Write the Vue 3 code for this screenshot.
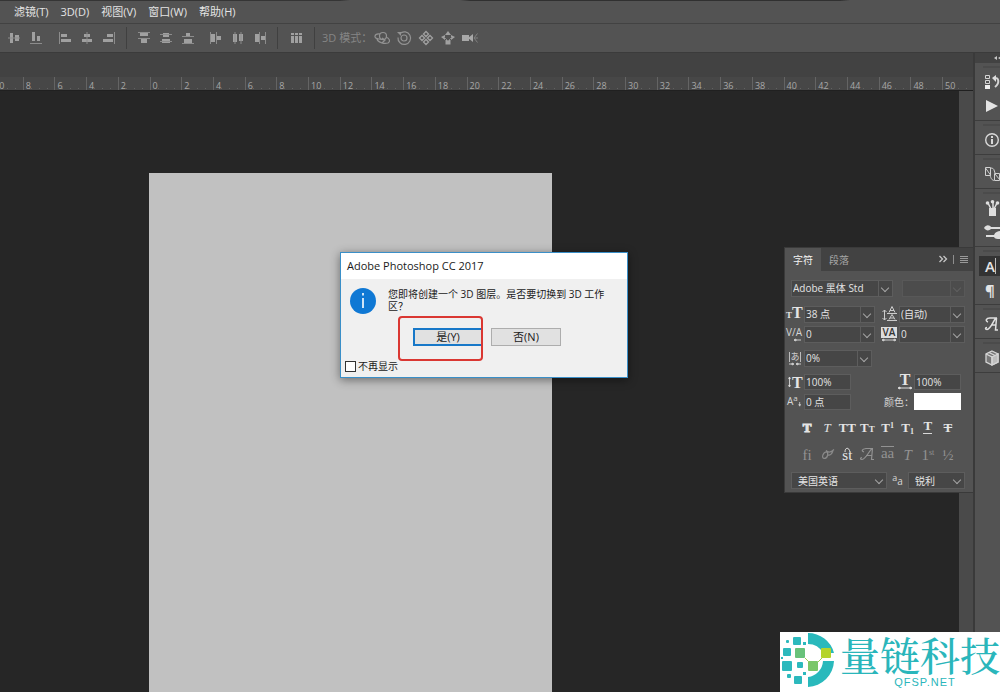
<script setup>
const menus = ['滤镜(T)', '3D(D)', '视图(V)', '窗口(W)', '帮助(H)']

const ruler = []
for (let n = -10; n <= 50; n += 2) ruler.push(Math.abs(n))

const toolGroups = [
  {
    cls: 'first',
    items: [
      { label: '垂直居中对齐', d: 'M4 3h3v10H4zM9 5h4v6H9z', l: 'M2 8h12' },
      { label: '底对齐', d: 'M4 2h3v9H4zM9 6h3v5H9z', l: 'M2 13.5h12' }
    ]
  },
  {
    cls: 'second',
    items: [
      { label: '左对齐', d: 'M4 4h6v3H4zM4 9h10v3H4z', l: 'M2.5 2v12' },
      { label: '水平居中对齐', d: 'M5 4h6v3H5zM3 9h10v3H3z', l: 'M8 2v12' },
      { label: '右对齐', d: 'M6 4h6v3H6zM2 9h10v3H2z', l: 'M13.5 2v12' }
    ]
  },
  {
    cls: 'third',
    items: [
      { label: '按顶分布', d: 'M4 3h8v3H4zM5 9h6v4H5z', l: 'M2 2.5h12M2 8.5h12' },
      { label: '垂直居中分布', d: 'M5 3h6v4H5zM4 9h8v4H4z', l: 'M2 4.5h12M2 11.5h12' },
      { label: '按底分布', d: 'M6 3h4v3H6zM4 9h8v4H4z', l: 'M2 6.5h12M2 13.5h12' }
    ]
  },
  {
    cls: 'fourth',
    items: [
      { label: '按左分布', d: 'M3 4h4v8H3zM9 6h4v4H9z', l: 'M2.5 2v12M8.5 2v12' },
      { label: '水平居中分布', d: 'M3 4h4v8H3zM9 4h4v7H9z', l: 'M5 2v12M11 2v12' },
      { label: '按右分布', d: 'M3 4h4v8H3zM9 6h4v4H9z', l: 'M7.5 2v12M13.5 2v12' }
    ]
  },
  {
    cls: 'fifth',
    items: [{ label: '自动对齐图层', d: 'M3 3h3v2H3zM3 6h3v7H3zM7 3h3v2H7zM7 6h3v7H7zM11 3h3v2h-3zM11 6h3v7h-3z', l: '' }]
  }
]
</script>

<template>
  <div class="app">
    <nav class="menubar">
      <button v-for="m in menus" :key="m" type="button">{{ m }}</button>
    </nav>

    <div class="toolbar">
      <div v-for="g in toolGroups" :key="g.cls" class="tools" :class="g.cls">
        <button v-for="t in g.items" :key="t.label" type="button" :aria-label="t.label">
          <svg viewBox="0 0 16 16"><path :d="t.d" fill="#a0a0a0" /><path :d="t.l" stroke="#8c8c8c" fill="none" /></svg>
        </button>
      </div>
      <span class="mode">3D 模式：</span>
      <div class="tools modes">
        <button type="button" aria-label="旋转 3D 对象">
          <svg viewBox="0 0 16 16" fill="none" stroke="#929292" stroke-width="1.2"><circle cx="9" cy="6" r="3.500" /><path d="M6 4C0 3-1 9 5 9l6 1M3 9c1 4 8 5 11 4 3-2 1-5-2-6M8 8l3 2-3 3" /></svg>
        </button>
        <button type="button" aria-label="滚动 3D 对象">
          <svg viewBox="0 0 16 16" fill="none" stroke="#929292" stroke-width="1.2"><path d="M4 3.500a6.300 6.300 0 1 1-2 4" /><path d="M1 2h4v4z" fill="#929292" stroke="none" /><circle cx="8" cy="8" r="3" /></svg>
        </button>
        <button type="button" aria-label="拖动 3D 对象">
          <svg viewBox="0 0 16 16" fill="none" stroke="#a0a0a0" stroke-width="1.3"><path d="M8 1.500L10.500 4 8 6.500 5.500 4zM8 9.500l2.500 2.500L8 14.500 5.500 12zM1.500 8L4 5.500 6.500 8 4 10.500zM9.500 8L12 5.500 14.500 8 12 10.500z" /></svg>
        </button>
        <button type="button" aria-label="滑动 3D 对象">
          <svg viewBox="0 0 16 16" fill="#a0a0a0"><path d="M8 1l3 4H5zM1 7l4-2v5zM15 7l-4-2v5zM5.500 10h5v4.500h-5z" /><path d="M4 7l4 4 4-4" fill="none" stroke="#8a8a8a" /></svg>
        </button>
        <button type="button" aria-label="缩放 3D 相机">
          <svg viewBox="0 0 16 16" fill="#a8a8a8"><path d="M0 5h7v6H0zM6 8l5-4v8z" /><path d="M15.500 3.500L12 8l3.500 4.500M12 8h4" fill="none" stroke="#808080" /></svg>
        </button>
      </div>
    </div>

    <div class="workspace">
      <main class="document">
        <div class="tabstrip"></div>
        <div class="ruler"><span v-for="(n, i) in ruler" :key="i">{{ n }}</span></div>
        <div class="stage">
          <div class="canvas"><div class="page"></div></div>
          <div class="scroll"></div>
        </div>
      </main>

      <aside class="dock">
        <div class="dockhead"><svg viewBox="0 0 8 6" fill="#c8c8c8"><path d="M4 1v4L1 3zM8 1v4L5 3z" /></svg></div>
        <div class="dockgroup">
          <button type="button" aria-label="历史记录">
            <svg viewBox="0 0 16 16" fill="none" stroke="#d4d4d4"><path d="M.500 1.500h4v3h-4zM.500 6.500h4v3h-4z" /><path d="M0 11h5v4H0z" fill="#eee" stroke="none" /><path d="M9 4c5-1 6 5 1 9" stroke-width="2" /><path d="M11 1L7 4l4 4z" fill="#ddd" stroke="none" /></svg>
          </button>
          <button type="button" aria-label="动作"><svg viewBox="0 0 16 16" fill="#e4e4e4"><path d="M1 2l12 6-12 6z" /></svg></button>
        </div>
        <div class="dockgroup">
          <button type="button" aria-label="信息">
            <svg viewBox="0 0 16 16" fill="none" stroke="#d8d8d8"><circle cx="7" cy="8" r="6.300" stroke-width="1.400" /><path d="M7 4v2M7 7v5" stroke-width="2" /></svg>
          </button>
        </div>
        <div class="dockgroup">
          <button type="button" aria-label="图层复合">
            <svg viewBox="0 0 16 16" fill="none" stroke="#d0d0d0"><path d="M.500 1.500h5v8h-5zM9.500 7.500h5v7h-5zM.500 2l5 7M6 2c3 0 3 2 4 5M5 9c1 4 2 5 4 5.500M10 8l5 6" /></svg>
          </button>
        </div>
        <div class="dockgroup">
          <button type="button" aria-label="画笔预设">
            <svg viewBox="0 0 16 16" fill="#dedede"><path d="M4 8h7v8H4z" /><path d="M6 9L3 3M8 9V2M9 9l3-6" stroke="#dedede" stroke-width="1.500" /><circle cx="2.500" cy="3" r="1.800" /><circle cx="7.500" cy="1.800" r="1.800" /><circle cx="12.500" cy="3" r="1.800" /></svg>
          </button>
          <button type="button" aria-label="画笔">
            <svg viewBox="0 0 16 16" fill="#dedede"><path d="M-1 4c2-4 6-3 7-1h9v2H6C4 7 1 7-1 4zM1 11h8c1-3 4-4 6-4v8c-3 0-5 0-6-2H1z" /></svg>
          </button>
        </div>
        <div class="dockgroup">
          <button type="button" class="on" aria-label="字符"><span class="char">A</span></button>
          <button type="button" aria-label="段落"><span class="para">¶</span></button>
        </div>
        <div class="dockgroup">
          <button type="button" aria-label="字形">
            <svg viewBox="0 0 16 16" fill="none" stroke="#e0e0e0" stroke-width="1.500"><path d="M3 6C0 5 1 2 5 2h7M11.500 2l-1 12H13M11 2C8 5 6 13 2 13.500c-2 0-2-2 0-2M6 9h5" /></svg>
          </button>
        </div>
        <div class="dockgroup">
          <button type="button" aria-label="3D">
            <svg viewBox="0 0 16 16" stroke="#d5d5d5" stroke-width="1.300"><path d="M7 1l6 3v8l-6 3-6-3V4z" fill="#777" /><path d="M7 7l6-3v8l-6 3z" fill="#bdbdbd" /><path d="M1 4l6 3v8M4 2.500l6 3" fill="none" /></svg>
          </button>
        </div>
      </aside>
    </div>

    <section class="panel" aria-label="字符面板">
      <header class="tabs">
        <button type="button" class="active">字符</button>
        <button type="button">段落</button>
        <svg class="ctl" viewBox="0 0 32 12" fill="none" stroke="#c6c6c6"><path d="M1.500 3l3 3-3 3M5.500 3l3 3-3 3" stroke-width="1.300" /><path d="M15.500 2v9" stroke="#8e8e8e" /><path d="M22 3.500h8M22 5.500h8M22 7.500h8M22 9.500h8" stroke="#999" /></svg>
      </header>

      <div class="row font">
        <span class="pick"><select aria-label="字体"><option>Adobe 黑体 Std</option></select></span>
        <span class="pick off"><select aria-label="字体样式" disabled><option></option></select></span>
      </div>

      <div class="pairs">
        <label for="size" aria-label="字体大小"><span class="ser"><small>T</small>T</span></label>
        <span class="pick"><select id="size"><option>38 点</option></select></span>
        <label for="lead" aria-label="行距"><svg viewBox="0 0 18 16" fill="none" stroke="#ccc"><path d="M3.500 4v10M1.500 6l2-2 2 2M1.500 12l2 2 2-2M8 6.500l3-6 3 6M9 4.500h4M8 13.500l3-5 3 5M9 12h4M6 7.500h10M6 14.500h10" /></svg></label>
        <span class="pick"><select id="lead"><option>(自动)</option></select></span>
        <label for="kern" aria-label="字距微调"><span class="va">V/A</span><svg class="under" viewBox="0 0 16 4" stroke="#ccc" fill="#ccc"><path d="M8 2h7M10 1L8 2l2 1z" /></svg></label>
        <span class="pick"><select id="kern"><option>0</option></select></span>
        <label for="track" aria-label="字距调整"><span class="va box">VA</span><svg class="under" viewBox="0 0 16 4" stroke="#ccc" fill="#ccc"><path d="M1 2h14M3 1L1 2l2 1zM13 1l2 1-2 1z" /></svg></label>
        <span class="pick"><select id="track"><option>0</option></select></span>
      </div>

      <div class="row prop">
        <label for="tsume" aria-label="比例间距"><span class="jp">あ</span><svg class="under" viewBox="0 0 16 4" stroke="#ccc" fill="#ccc"><path d="M2 2h4M9 2h5M5 1l2 1-2 1zM11 1L9 2l2 1z" /></svg></label>
        <span class="pick"><select id="tsume"><option>0%</option></select></span>
      </div>

      <div class="scales">
        <label for="vs" aria-label="垂直缩放"><svg viewBox="0 0 6 14" class="arrow" stroke="#ddd" fill="#ddd"><path d="M3 2v10M3 1l1 2H2zM3 13l1-2H2z" /></svg><span class="ser">T</span></label>
        <input id="vs" value="100%" />
        <label for="hs" class="hs" aria-label="水平缩放"><span class="ser">T</span><svg class="under" viewBox="0 0 16 4" stroke="#ddd" fill="#ddd"><path d="M2 2h12M3 1L1 2l2 1zM13 1l2 1-2 1z" /></svg></label>
        <input id="hs" value="100%" />
        <label for="base" aria-label="基线偏移"><span class="va">A<sup>a</sup></span><svg class="arrow" viewBox="0 0 6 14" stroke="#ccc" fill="#ccc"><path d="M2 7v4M2 12l1-2H1z" /></svg></label>
        <input id="base" value="0 点" />
        <label for="tint" class="tint">颜色：</label>
        <button id="tint" type="button" class="swatch"></button>
      </div>

      <div class="glyphs bold">
        <button type="button" class="heavy" aria-label="仿粗体">T</button>
        <button type="button" aria-label="仿斜体"><i class="thin">T</i></button>
        <button type="button" aria-label="全部大写">TT</button>
        <button type="button" aria-label="小型大写">T<small>T</small></button>
        <button type="button" aria-label="上标">T<sup>1</sup></button>
        <button type="button" aria-label="下标">T<sub>1</sub></button>
        <button type="button" aria-label="下划线"><span class="line">T</span></button>
        <button type="button" aria-label="删除线"><s>T</s></button>
      </div>
      <div class="glyphs open">
        <button type="button" aria-label="标准连字">fi</button>
        <button type="button" aria-label="上下文替代字"><svg viewBox="0 0 16 16" fill="none" stroke="#8a8a8a" stroke-width="1.200"><path d="M9 6C4 5 2 12 5 12.500c4 0 5-6 2-8 2 2 5 2 8-1M9 9c3 1 4-2 5-4" /></svg></button>
        <button type="button" aria-label="自由连字" class="lit">st<svg class="liga" viewBox="0 0 10 5" fill="none" stroke="#e4e4e4"><path d="M3 5c0-5 4-5 5 0" /></svg></button>
        <button type="button" aria-label="花饰字"><svg viewBox="0 0 16 16" fill="none" stroke="#929292" stroke-width="1.200"><path d="M5 6C2 5 3 3 7 2.500h7M13.500 2.500l-1 11H15M13 2.500C10 5 7 13 3 13.500c-2 0-2-2 0-2M7 9.500h6" /></svg></button>
        <button type="button" aria-label="文体替代字"><span class="over">aa</span></button>
        <button type="button" aria-label="标题替代字"><i>T</i></button>
        <button type="button" aria-label="序数字">1<sup>st</sup></button>
        <button type="button" aria-label="分数字">½</button>
      </div>

      <div class="row lang">
        <span class="pick"><select aria-label="语言"><option>美国英语</option></select></span>
        <label for="aa" aria-label="消除锯齿"><sup>a</sup>a</label>
        <span class="pick"><select id="aa"><option>锐利</option></select></span>
      </div>
    </section>

    <div class="dialog" role="dialog" aria-labelledby="dlg-title">
      <h1 id="dlg-title">Adobe Photoshop CC 2017</h1>
      <div class="message">
        <svg viewBox="0 0 26 26"><circle cx="13" cy="13" r="13" fill="#0f78d4" /><path d="M13 10v10M13 5v2.500" stroke="#fff" stroke-width="1.600" /></svg>
        <p>您即将创建一个 3D 图层。是否要切换到 3D 工作区？</p>
      </div>
      <div class="actions">
        <span class="marked"><button type="button" class="yes">是(Y)</button></span>
        <button type="button">否(N)</button>
      </div>
      <label class="again"><input type="checkbox" />不再显示</label>
    </div>

    <div class="brand">
      <svg viewBox="0 0 56 56">
        <path d="M28 1A27 27 0 0 1 54 21H43A17 17 0 0 0 28 12zM54 29A27 27 0 0 1 28 55V45A17 17 0 0 0 43 29z" fill="#29b9bc" />
        <g fill="#2cb9bd"><rect x="13" y="5" width="8" height="8" rx="1" /><rect x="3" y="16" width="8" height="8" rx="1" /><rect x="2" y="29" width="10" height="10" rx="1" /><rect x="17" y="30" width="6" height="6" rx="1" /><rect x="14" y="44" width="8" height="8" rx="1" /><rect x="7" y="42" width="4" height="4" rx="1" /><rect x="6" y="8" width="3" height="3" rx="1" /><rect x="23" y="10" width="3" height="3" /><rect x="1" y="25" width="2" height="2" /><rect x="23" y="40" width="3" height="3" /></g>
        <rect x="15" y="16" width="10" height="10" rx="1" fill="#68c27a" /><rect x="28" y="29" width="10" height="10" rx="1" fill="#7bc768" /><rect x="41" y="16" width="10" height="10" rx="1" fill="#b4d42c" />
        <path d="M25 26l4 4M38 30l4-4" stroke="#9dce55" />
      </svg>
      <div class="name"><strong>量链科技</strong><span>QFSP.NET</span></div>
    </div>
  </div>
</template>

<style>
body { margin: 0; background: #262626; }
</style>

<style scoped>
* { box-sizing: border-box; }
.app {
  position: relative;
  display: flex;
  flex-direction: column;
  height: 100vh;
  overflow: hidden;
  background: #535353;
  color: #e4e4e4;
  font: 11px/14px "Open Sans", "Noto Sans CJK SC", sans-serif;
}
button, input, select { font: inherit; color: inherit; margin: 0; padding: 0; border: 0; background: none; border-radius: 0; }
svg { display: block; }

.menubar {
  display: flex;
  gap: 12px;
  height: 24px;
  padding: 0 14px;
  border-bottom: 1px solid #424242;
  background: linear-gradient(90deg, #353535 34%, #535353 35%, #535353 46%, #303030 47%, #303030 84%, #535353 85%) 0 0 / 100% 1px no-repeat #535353;
}
.toolbar { display: flex; align-items: center; height: 29px; border-bottom: 1px solid #3b3b3b; }
.tools { display: flex; }
.tools button { display: grid; place-items: center; width: 22px; height: 22px; }
.tools svg { width: 16px; height: 16px; }
.first { margin-left: 3px; }
.second { margin-left: 7px; }
.third { margin-left: 6px; padding-left: 6px; border-left: 1px solid #404040; }
.fourth { margin-left: 6px; }
.fifth { margin: 0 7px 0 6px; padding: 0 7px; border: solid #404040; border-width: 0 1px; }
.mode { width: 49px; color: #858585; white-space: nowrap; }

.workspace { display: flex; flex: 1; min-height: 0; }
.document { display: flex; flex-direction: column; flex: 1; min-width: 0; overflow: hidden; background: #424242; }
.tabstrip { height: 24px; }
.ruler {
  display: flex;
  height: 14px;
  margin: 0 -1px 0 -9px;
  border-bottom: 1px solid #202020;
  background: #474747;
  color: #a8a8a8;
  font-size: 9px;
  line-height: 17px;
}
.ruler span {
  flex: 1;
  padding-left: 2px;
  border-left: 1px solid #646464;
  background: linear-gradient(90deg, transparent 7px, #626262 7px) 0 11px / 8px 1px repeat-x;
}
.stage { display: flex; flex: 1; min-height: 0; }
.canvas { display: flex; flex: 1; padding: 82px 0 0 149px; background: #262626; }
.page { width: 403px; background: #c1c1c1; }
.scroll { width: 14px; background: #4a4a4a; }

.dock { width: 27px; overflow: hidden; border-left: 2px solid #3a3a3a; background: #535353; }
.dockhead { height: 10px; padding: 2px 0 0 18px; background: #424242; }
.dockhead svg { width: 8px; height: 6px; }
.dockgroup {
  padding: 7px 0 2px 4px;
  border-bottom: 1px solid #3d3d3d;
  background: linear-gradient(#4b4b4b, #4b4b4b) 8px 3px / 17px 2px no-repeat;
}
.dockgroup button { display: flex; align-items: center; width: 22px; height: 24px; padding-left: 6px; }
.dockgroup svg { flex: none; width: 16px; height: 16px; overflow: visible; }
.dockgroup .on { height: 20px; margin: 2px 0; background: #333; }
.char { font-size: 15px; font-weight: 600; line-height: 16px; border-right: 1px solid #bbb; }
.para { font-size: 15px; font-weight: 700; }

.panel {
  position: absolute;
  top: 248px;
  right: 27px;
  width: 188px;
  padding-bottom: 3px;
  background: #535353;
  box-shadow: 0 0 0 1px #3a3a3a;
  font-size: 10px;
}
.tabs { display: flex; height: 23px; background: #424242; }
.tabs button { width: 36px; color: #a5a5a5; }
.tabs .active { background: #535353; color: #f2f2f2; }
.ctl { width: 32px; height: 12px; margin: 5px 3px 0 auto; }
.row { display: flex; align-items: center; }
.pick { position: relative; display: block; height: 17px; border: 1px solid #5d5d5d; background: #464646; }
.pick select { display: block; width: 100%; height: 14px; padding-left: 1px; appearance: none; outline: 0; }
.pick::before { content: ""; position: absolute; inset: 0 13px 0 auto; border-left: 1px solid #5d5d5d; }
.pick::after {
  content: "";
  position: absolute;
  top: 4px;
  right: 4px;
  width: 5px;
  height: 5px;
  border: solid #a5a5a5;
  border-width: 0 1px 1px 0;
  transform: rotate(45deg);
  pointer-events: none;
}
.font { margin: 9px 8px 0 6px; gap: 9px; }
.font .pick { width: 102px; }
.font .off { flex: 1; width: auto; opacity: 0.5; }
.font .off::after { opacity: 0.4; }
.pairs { display: grid; grid-template-columns: 19px 71px 24px 1fr; row-gap: 3px; margin: 8px 8px 0 0; align-items: center; }
.panel label { color: #d6d6d6; line-height: 12px; }
.pairs label { justify-self: end; width: 18px; }
.pairs label > svg:not(.under) { width: 18px; height: 16px; }
.ser { font: bold 16px/15px "Liberation Serif", serif; color: #e4e4e4; }
.ser small { font-size: 9px; }
.va { display: block; font-size: 10px; line-height: 11px; white-space: nowrap; }
.box { width: 16px; background: #ddd; color: #333; font-weight: 600; text-align: center; }
.under { width: 16px; height: 4px; }
.jp { display: block; width: 12px; margin-left: 2px; border: solid #bbb; border-width: 0 1px; font-size: 9px; line-height: 10px; text-align: center; }
.prop { margin: 7px 0 0 2px; }
.prop label { width: 17px; }
.prop .pick { width: 68px; }
.scales { display: grid; grid-template-columns: 19px 47px 1fr 47px; row-gap: 3px; margin: 7px 12px 0 0; align-items: center; }
.scales input { width: 100%; height: 16px; padding: 0 1px; border: 1px solid #5d5d5d; background: #464646; }
.scales label { display: flex; align-items: center; padding-left: 2px; }
.arrow { flex: none; width: 5px; height: 14px; }
.scales .hs { flex-direction: column; justify-self: end; width: 18px; padding: 0; }
.scales .hs .ser { line-height: 12px; }
.scales sup { font-size: 8px; line-height: 0; }
.scales .tint { justify-self: end; white-space: nowrap; }
.scales .swatch { height: 17px; background: #fff; }
.glyphs { display: grid; grid-template-columns: repeat(8, 1fr); margin: 9px 15px 0 12px; font: 13px/18px "Liberation Serif", serif; }
.glyphs button { position: relative; display: flex; align-items: baseline; justify-content: center; height: 18px; }
.glyphs sup, .glyphs sub, .glyphs small { font-size: 9px; line-height: 9px; }
.glyphs sup { align-self: flex-start; padding-top: 2px; font-size: 8px; }
.glyphs sub { align-self: flex-end; padding-bottom: 1px; font-size: 8px; }
.glyphs svg { width: 16px; height: 16px; }
.glyphs .liga { position: absolute; top: 1px; left: 5px; width: 10px; height: 5px; }
.glyphs .heavy { -webkit-text-stroke: 1px #e4e4e4; }
.bold { font-weight: bold; }
.thin { font-weight: normal; }
.line { border-bottom: 1px solid #d8d8d8; line-height: 14px; }
.open { color: #929292; font-size: 15px; }
.open .lit { color: #e8e8e8; }
.over { border-top: 1px solid #929292; line-height: 12px; }
.lang { margin: 8px 8px 0 6px; }
.lang .pick:first-child { width: 96px; }
.lang .pick:last-child { flex: 1; }
.lang .pick::before { display: none; }
.lang .pick select { padding-left: 6px; height: 15px; }
.lang label { width: 21px; text-align: center; }
.lang sup { font-size: 9px; line-height: 0; }

.dialog {
  position: absolute;
  top: 252px;
  left: 340px;
  width: 288px;
  border: 1px solid #3a8fc8;
  background: #f0f0f0;
  color: #1a1a1a;
  font-size: 10px;
  box-shadow: 0 2px 9px rgba(0, 0, 0, 0.45);
}
.dialog h1 { margin: 0; padding: 0 6px; background: #fff; font-size: 11px; font-weight: 400; line-height: 26px; }
.message { display: flex; gap: 12px; padding: 9px 9px 0; }
.message svg { flex: none; width: 26px; height: 26px; }
.message p { width: 224px; margin: 0; line-height: 12px; }
.actions { display: flex; gap: 8px; margin: 14px 0 0 72px; font-size: 11px; }
.actions button { width: 70px; height: 18px; border: 1px solid #adadad; background: #e1e1e1; line-height: 14px; }
.actions .yes { display: block; border: 2px solid #1878c8; }
.marked { position: relative; }
.marked::after { content: ""; position: absolute; inset: -12px 0 -15px -15px; border: 2px solid #da3732; border-radius: 4px; }
.again { display: flex; align-items: center; gap: 2px; width: 100px; margin: 13px 0 4px 4px; line-height: 14px; }
.again input { appearance: none; width: 11px; height: 11px; border: 1px solid #333; background: #fff; }

.brand { position: absolute; right: 0; bottom: 0; display: flex; width: 220px; height: 60px; background: #fff; color: #2ab6bb; }
.brand svg { flex: none; width: 56px; height: 56px; }
.name { display: flex; flex-direction: column; align-items: center; padding-left: 4px; }
.name strong { font: 500 40px/44px "Noto Serif CJK SC", "Noto Sans CJK SC", serif; white-space: nowrap; }
.name span { font: 11px/12px "Liberation Sans", sans-serif; letter-spacing: 1px; margin-right: -10px; }
</style>
